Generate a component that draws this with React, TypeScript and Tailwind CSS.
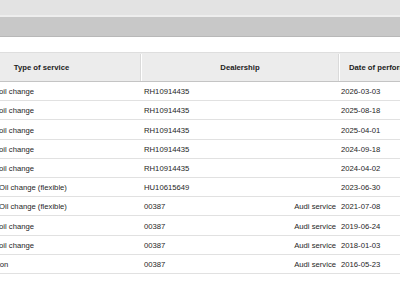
import React from "react";

interface ServiceRow {
  service: string;
  code: string;
  dealer: string;
  date: string;
}

const rows: ServiceRow[] = [
  { service: "Inspection with oil change", code: "RH10914435", dealer: "", date: "2026-03-03" },
  { service: "Inspection with oil change", code: "RH10914435", dealer: "", date: "2025-08-18" },
  { service: "Inspection with oil change", code: "RH10914435", dealer: "", date: "2025-04-01" },
  { service: "Inspection with oil change", code: "RH10914435", dealer: "", date: "2024-09-18" },
  { service: "Inspection with oil change", code: "RH10914435", dealer: "", date: "2024-04-02" },
  { service: "Inspection with Oil change (flexible)", code: "HU10615649", dealer: "", date: "2023-06-30" },
  { service: "Inspection with Oil change (flexible)", code: "00387", dealer: "Audi service", date: "2021-07-08" },
  { service: "Inspection with oil change", code: "00387", dealer: "Audi service", date: "2019-06-24" },
  { service: "Inspection with oil change", code: "00387", dealer: "Audi service", date: "2018-01-03" },
  { service: "Service inspection", code: "00387", dealer: "Audi service", date: "2016-05-23" },
];

function HeaderCell({ label, last }: { label: string; last?: boolean }) {
  return (
    <div
      className={`flex items-center justify-center font-bold text-[#222] ${
        last ? "border-l border-white justify-start pl-[9px]" : "border-r border-[#dadada]"
      }`}
    >
      <span className="whitespace-nowrap">{label}</span>
    </div>
  );
}

export default function App() {
  return (
    <div
      className="w-[400px] h-[300px] bg-white overflow-hidden flex flex-col"
      style={{ fontFamily: '"Liberation Sans", Arial, sans-serif' }}
    >
      {/* window chrome */}
      <div className="h-[15px] bg-[#e3e3e3] shrink-0" />
      <div className="h-[2px] bg-[#eeeeee] shrink-0" />
      <div className="h-[20px] bg-[#c8c8c8] border-b border-[#b8b8b8] shrink-0" />
      <div className="h-[15px] shrink-0" />

      {/* service table, scrolled a little to the right */}
      <div className="ml-[-57px] w-[500px] text-[7.7px] leading-none">
        <div className="grid grid-cols-[198px_198px_104px] h-[30px] pt-[1px] bg-[#ececec] border-t border-[#dedede] border-b border-b-[#c4c4c4]">
          <HeaderCell label="Type of service" />
          <div className="flex items-center justify-center font-bold text-[#222] border-l border-white border-r border-r-[#dadada]">
            Dealership
          </div>
          <HeaderCell label="Date of performance" last />
        </div>

        {rows.map((r, i) => (
          <div
            key={i}
            className="grid grid-cols-[198px_198px_104px] h-[19.2px] pt-[2px] border-b border-[#e1e1e1] text-[#262626]"
          >
            <div className="flex items-center pl-[3px] overflow-hidden whitespace-nowrap">
              {r.service}
            </div>
            <div className="flex items-center justify-between pl-[3px] pr-[3px] whitespace-nowrap">
              <span>{r.code}</span>
              <span>{r.dealer}</span>
            </div>
            <div className="flex items-center pl-[2px] whitespace-nowrap">{r.date}</div>
          </div>
        ))}
      </div>
    </div>
  );
}
